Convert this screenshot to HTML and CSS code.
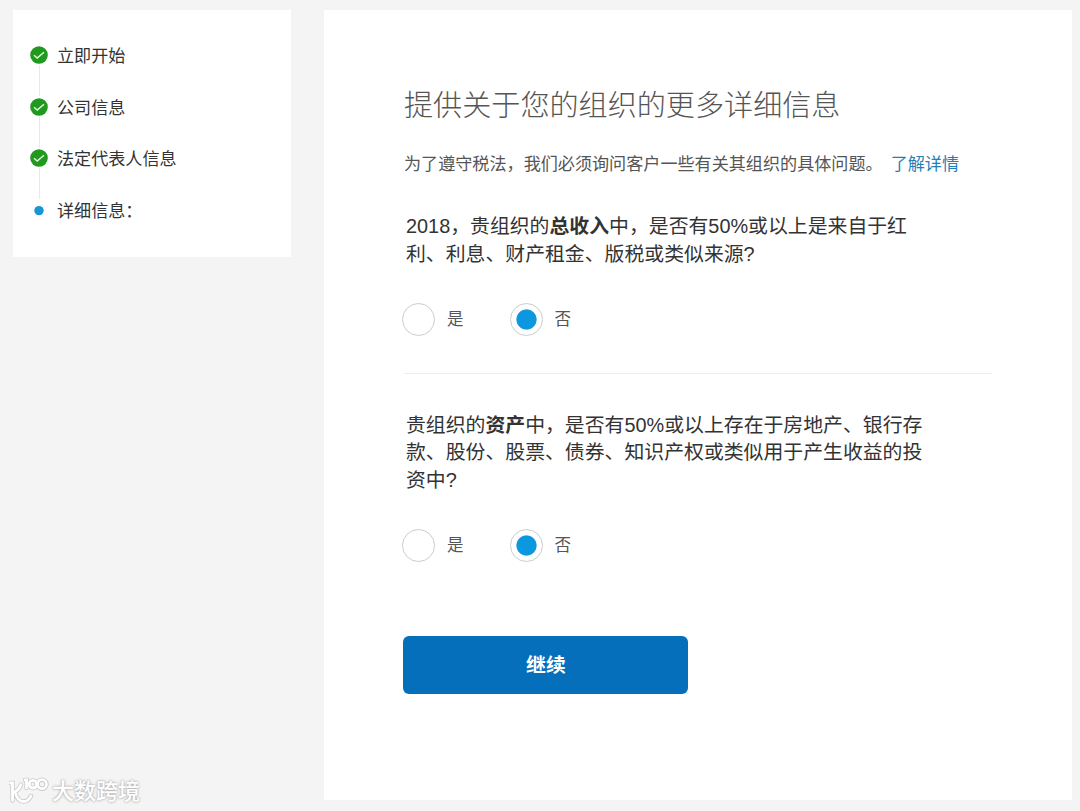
FILE: index.html
```html
<!DOCTYPE html>
<html lang="zh-CN">
<head>
  <meta charset="UTF-8" />
  <meta name="viewport" content="width=device-width, initial-scale=1.0"/>
  <title>详细信息</title>
  <link rel="stylesheet" href="styles.css">
</head>
<body>

  <div class="page">
    <ul class="steps">
      <li class="step">
        <svg class="step-icon" viewBox="0 0 18 18"><circle cx="9" cy="9" r="8.8" fill="#1f9a1f"/><path d="M4 9.2l3.2 2.8 6.8-5.7" fill="none" stroke="#e4f7dc" stroke-width="1.5"/></svg>
        <span>立即开始</span>
      </li>
      <li class="step">
        <svg class="step-icon" viewBox="0 0 18 18"><circle cx="9" cy="9" r="8.8" fill="#1f9a1f"/><path d="M4 9.2l3.2 2.8 6.8-5.7" fill="none" stroke="#e4f7dc" stroke-width="1.5"/></svg>
        <span>公司信息</span>
      </li>
      <li class="step">
        <svg class="step-icon" viewBox="0 0 18 18"><circle cx="9" cy="9" r="8.8" fill="#1f9a1f"/><path d="M4 9.2l3.2 2.8 6.8-5.7" fill="none" stroke="#e4f7dc" stroke-width="1.5"/></svg>
        <span>法定代表人信息</span>
      </li>
      <li class="step">
        <svg class="step-icon" viewBox="0 0 18 18"><circle cx="9" cy="9.6" r="4.7" fill="#1796d4"/></svg>
        <span>详细信息：</span>
      </li>
    </ul>

    <div class="content">
      <h1>提供关于您的组织的更多详细信息</h1>
      <p class="intro">为了遵守税法，我们必须询问客户一些有关其组织的具体问题。<a class="more" href="#">了解详情</a></p>

      <form>
        <div class="question">
          <p class="question-text">2018，贵组织的<b>总收入</b>中，是否有50%或以上是来自于红利、利息、财产租金、版税或类似来源?</p>
          <div class="options">
            <label class="option"><input type="radio" name="income" value="yes" />是</label>
            <label class="option"><input type="radio" name="income" value="no" checked />否</label>
          </div>
        </div>

        <div class="question">
          <p class="question-text">贵组织的<b>资产</b>中，是否有50%或以上存在于房地产、银行存款、股份、股票、债券、知识产权或类似用于产生收益的投资中?</p>
          <div class="options">
            <label class="option"><input type="radio" name="assets" value="yes" />是</label>
            <label class="option"><input type="radio" name="assets" value="no" checked />否</label>
          </div>
        </div>

        <button type="button">继续</button>
      </form>
    </div>
  </div>

  <div class="watermark">
    <svg class="watermark-logo" viewBox="0 0 40 30">
      <g fill="none" stroke-linecap="round">
        <g stroke="#c9c9c9" stroke-width="4.4">
          <path d="M1.5 6h2v17.500M12 7.500q-1.500 5-6.500 7.500M6.500 16q2 8.500 8 8.500q5 0 7.500-5.500"/>
          <path d="M16 3h1.500v8"/><circle cx="24" cy="7.2" r="3.8"/><circle cx="33" cy="7.2" r="4.5"/>
        </g>
        <g stroke="#fff" stroke-width="2.8">
          <path d="M1.5 6h2v17.500M12 7.500q-1.500 5-6.500 7.500M6.500 16q2 8.500 8 8.500q5 0 7.500-5.500"/>
          <path d="M16 3h1.500v8"/><circle cx="24" cy="7.2" r="3.8"/><circle cx="33" cy="7.2" r="4.5"/>
        </g>
      </g>
    </svg>
    <span>大数跨境</span>
  </div>

</body>
</html>
```
FILE: styles.css
```css
body {
  font-family: "Liberation Sans", "Noto Sans CJK SC", sans-serif;
  background-color: #f4f4f4;
  margin: 0;
  color: #333;
}

.page {
  display: flex;
  align-items: flex-start;
  gap: 33px;
  padding: 10px 8px 11px 13px;
}

.steps {
  box-sizing: border-box;
  width: 278px;
  height: 247px;
  margin: 0;
  padding: 32px 17px 0;
  background-color: white;
  list-style: none;
  font-size: 17.1px;
}

.step {
  position: relative;
  display: flex;
  align-items: center;
  gap: 9px;
  height: 26px;
  margin-bottom: 25.7px;
}

.step span {
  padding-top: 4px;
  line-height: 26px;
}

.step-icon {
  width: 18px;
  height: 18px;
}

/* line joining a step to the next one */
.step:not(:last-child)::after {
  content: "";
  position: absolute;
  left: 9px;
  top: 23px;
  width: 1px;
  height: 31px;
  background-color: #e9e9e9;
}

.content {
  box-sizing: border-box;
  flex: 1;
  height: 790px;
  padding: 75px 80px 0 79px;
  background-color: white;
}

h1 {
  margin: 0 0 0 1px;
  font-size: 29.1px;
  line-height: 42px;
  font-weight: 300;
  color: #555;
}

.intro {
  margin: 25px 0 0 1px;
  font-size: 17.1px;
  line-height: 26px;
  color: #555;
  white-space: nowrap;
}

.more {
  margin-left: 8px;
  color: #2180b8;
  text-decoration: none;
}

.question {
  margin-left: 1px;
}

.question + .question {
  margin-top: 37px;
  padding-top: 38px;
  border-top: 1px solid #eee;
}

.question-text {
  width: 520px;
  margin: 0 0 0 2px;
  font-size: 19.88px;
  line-height: 27.8px;
}

.intro + form {
  margin-top: 35px;
}

.options {
  display: flex;
  gap: 46px;
  margin: 34px 0 0 -2px;
}

.option {
  display: flex;
  align-items: center;
  gap: 12px;
  font-size: 16.5px;
  line-height: 33px;
  color: #555;
}

input[type="radio"] {
  appearance: none;
  box-sizing: border-box;
  width: 33px;
  height: 33px;
  margin: 0;
  border: 1px solid #ccc;
  border-radius: 50%;
}

input[type="radio"]:checked {
  background: radial-gradient(circle, #0b98de 9.7px, white 10.5px);
}

button {
  display: block;
  width: 285px;
  height: 58px;
  margin: 74px 0 0 0.4px;
  padding: 0 0 2px;
  background-color: #056fbb;
  color: white;
  border: none;
  border-radius: 6px;
  font-family: inherit;
  font-size: 19.85px;
  font-weight: bold;
}

/* sits over the page corner */
.watermark {
  position: absolute;
  left: 9px;
  bottom: 3px;
  display: flex;
  align-items: center;
  gap: 3px;
  font-size: 22px;
  line-height: 32px;
  font-weight: 500;
  color: white;
  text-shadow: 0 0 2px #aaa, 0 0 3px #bbb;
}

.watermark-logo {
  width: 40px;
  height: 30px;
}
```
